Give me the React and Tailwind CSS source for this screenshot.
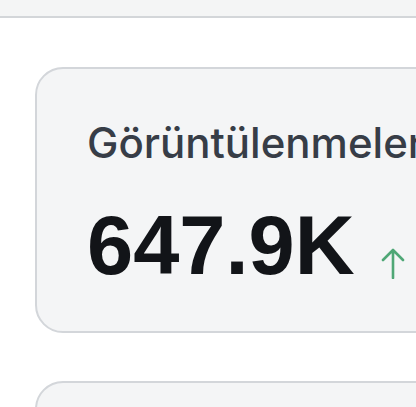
import React from 'react';

const StatCard = ({ label, value }) => {
  return (
    <div className="w-[520px] h-[266px] shrink-0 rounded-[28px] border-2 border-[#d3d6da] bg-[#f4f5f6] pl-[50px] pt-[48px]">
      <div className="text-[42px] leading-[52px] font-medium text-[#373d47] font-['Inter',sans-serif]">{label}</div>
      <div className="mt-[37px] flex items-end">
        <span className="text-[83px] leading-[80px] font-bold text-[#121418] font-['Liberation_Sans',Arial,sans-serif]">
          {value}
        </span>
        <svg className="ml-[26px] mb-[7px]" width="24" height="31" viewBox="0 0 24 31" fill="none">
          <path d="M12 30V2M2 12L12 2L22 12" stroke="#4fa776" strokeWidth="2.6" strokeLinecap="round" strokeLinejoin="round" />
        </svg>
      </div>
    </div>
  );
};

const App = () => {
  return (
    <div className="w-[416px] h-[407px] overflow-hidden bg-white">
      <div className="h-[18px] bg-[#f4f5f5] border-b-2 border-[#d3d6d9]"></div>
      <div className="pl-[35px] pt-[49px] flex flex-col gap-[48px]">
        <StatCard label="Görüntülenmeler" value="647.9K" />
        <div className="w-[520px] h-[200px] shrink-0 rounded-[28px] border-2 border-[#d3d6da] bg-[#f4f5f6]"></div>
      </div>
    </div>
  );
};

export default App;
